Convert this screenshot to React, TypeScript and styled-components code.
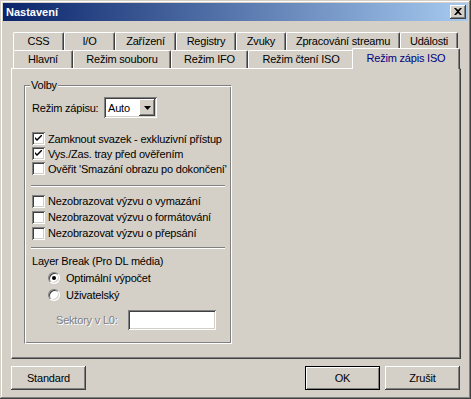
import * as React from 'react';
import styled, { createGlobalStyle } from 'styled-components';

const GlobalStyle = createGlobalStyle`
  body {
    margin: 0;
    background: #d4d0c8;
    font-family: "Liberation Sans", Arial, sans-serif;
    font-size: 11px;
    letter-spacing: -0.2px;
    color: #000;
  }
`;

const raised = `
  box-shadow: inset -1px -1px #404040, inset 1px 1px #fff, inset -2px -2px #808080, inset 2px 2px #d4d0c8;
`;
const sunken = `
  box-shadow: inset 1px 1px #808080, inset -1px -1px #fff, inset 2px 2px #404040, inset -2px -2px #d4d0c8;
`;

const Window = styled.div`
  width: 471px;
  height: 399px;
  box-sizing: border-box;
  padding: 3px;
  background: #d4d0c8;
  box-shadow: inset -1px -1px #404040, inset 1px 1px #d4d0c8, inset -2px -2px #808080, inset 2px 2px #fff;
  display: flex;
  flex-direction: column;
`;

const TitleBar = styled.div`
  height: 18px;
  flex-shrink: 0;
  display: flex;
  align-items: center;
  justify-content: space-between;
  padding: 0 2px 0 2px;
  background: linear-gradient(to right, #0a246a, #a6caf0);
`;

const TitleText = styled.span`
  color: #fff;
  font-weight: bold;
  font-size: 11px;
  letter-spacing: 0;
  padding-left: 1px;
`;

const CloseButton = styled.div`
  width: 16px;
  height: 14px;
  box-sizing: border-box;
  background: #d4d0c8;
  ${raised}
  display: flex;
  align-items: center;
  justify-content: center;
  padding-bottom: 1px;
`;

const TabControl = styled.div`
  width: 450px;
  margin: 11px 0 0 8px;
  display: flex;
  flex-direction: column;
`;

const TabRow = styled.div`
  display: flex;
  align-items: flex-start;
  height: 18px;
  padding: 0 3px 0 2px;
`;

const Tab = styled.div<{ $w: number; $active?: boolean }>`
  flex-shrink: 0;
  box-sizing: border-box;
  width: ${(p) => (p.$active ? p.$w + 4 : p.$w)}px;
  height: ${(p) => (p.$active ? 21 : 18)}px;
  margin: ${(p) => (p.$active ? '-2px -2px -1px -2px' : '0')};
  position: ${(p) => (p.$active ? 'relative' : 'static')};
  z-index: ${(p) => (p.$active ? 1 : 0)};
  background: #d4d0c8;
  color: ${(p) => (p.$active ? '#000080' : '#000')};
  border-top: 1px solid #fff;
  border-left: 1px solid #fff;
  border-right: 1px solid #404040;
  border-radius: 2px 2px 0 0;
  box-shadow: inset -1px 0 #808080;
  text-align: center;
  line-height: ${(p) => (p.$active ? 18 : 16)}px;
  white-space: nowrap;
`;

const Panel = styled.div`
  height: 291px;
  box-sizing: border-box;
  border: 1px solid;
  border-color: #fff #404040 #404040 #fff;
  box-shadow: inset -1px -1px #808080;
  padding: 16px 0 0 12px;
`;

const GroupBox = styled.div`
  width: 208px;
  height: 259px;
  box-sizing: border-box;
  border: 1px solid;
  border-color: #808080 #fff #fff #808080;
  box-shadow: inset 1px 1px #fff, inset -1px -1px #808080;
  padding: 0 0 0 7px;
  display: flex;
  flex-direction: column;
`;

const Legend = styled.div`
  align-self: flex-start;
  margin: -7px 0 0 -2px;
  padding: 0 1px;
  line-height: 13px;
  background: #d4d0c8;
`;

const FieldRow = styled.div<{ $top: number; $h: number }>`
  display: flex;
  align-items: center;
  margin-top: ${(p) => p.$top}px;
  height: ${(p) => p.$h}px;
  flex-shrink: 0;
`;

const FieldLabel = styled.span<{ $w: number; $indent?: number; $disabled?: boolean }>`
  width: ${(p) => p.$w}px;
  margin-left: ${(p) => p.$indent || 0}px;
  flex-shrink: 0;
  color: ${(p) => (p.$disabled ? '#808080' : '#000')};
  text-shadow: ${(p) => (p.$disabled ? '1px 1px 0 #fff' : 'none')};
`;

const Combo = styled.div`
  width: 53px;
  height: 21px;
  box-sizing: border-box;
  background: #fff;
  ${sunken}
  padding: 2px;
  display: flex;
  align-items: center;
`;

const ComboText = styled.span`
  flex: 1;
  padding-left: 2px;
`;

const DropButton = styled.div`
  width: 16px;
  height: 17px;
  box-sizing: border-box;
  background: #d4d0c8;
  ${raised}
  display: flex;
  align-items: center;
  justify-content: center;
`;

const CheckBox = styled.div`
  width: 13px;
  height: 13px;
  flex-shrink: 0;
  box-sizing: border-box;
  background: #fff;
  ${sunken}
  display: flex;
  align-items: center;
  justify-content: center;
`;

const OptionText = styled.span<{ $w: number; $gap: number }>`
  margin-left: ${(p) => p.$gap}px;
  width: ${(p) => p.$w}px;
  overflow: hidden;
  white-space: nowrap;
`;

const Separator = styled.div<{ $top: number }>`
  width: 194px;
  height: 1px;
  margin: ${(p) => p.$top}px 0 0 -1px;
  background: #808080;
  border-bottom: 1px solid #fff;
  flex-shrink: 0;
`;

const Caption = styled.div<{ $top: number }>`
  margin-top: ${(p) => p.$top}px;
  line-height: 13px;
`;

const Radio = styled.div`
  width: 12px;
  height: 12px;
  margin-left: 16px;
  flex-shrink: 0;
  box-sizing: border-box;
  border-radius: 50%;
  background: #fff;
  border: 1px solid;
  border-color: #808080 #fff #fff #808080;
  box-shadow: inset 1px 1px #404040, inset -1px -1px #d4d0c8;
  display: flex;
  align-items: center;
  justify-content: center;
`;

const RadioDot = styled.div`
  width: 4px;
  height: 4px;
  border-radius: 50%;
  background: #000;
`;

const TextInput = styled.div`
  width: 88px;
  height: 20px;
  box-sizing: border-box;
  background: #fff;
  ${sunken}
`;

const ButtonRow = styled.div`
  display: flex;
  margin-top: 7px;
  padding: 0 8px;
  gap: 5px;
`;

const Button = styled.div<{ $default?: boolean; $push?: boolean }>`
  width: 75px;
  height: 24px;
  box-sizing: border-box;
  margin-left: ${(p) => (p.$push ? 'auto' : '0')};
  display: flex;
  align-items: center;
  justify-content: center;
  background: #d4d0c8;
  ${(p) =>
    p.$default
      ? 'border: 1px solid #000; box-shadow: inset 1px 1px #fff, inset -1px -1px #808080;'
      : raised}
`;

const row1 = [
  { label: 'CSS', w: 51 },
  { label: 'I/O', w: 51 },
  { label: 'Zařízení', w: 61 },
  { label: 'Registry', w: 60 },
  { label: 'Zvuky', w: 50 },
  { label: 'Zpracování streamu', w: 114 },
  { label: 'Události', w: 58 },
];

const row2 = [
  { label: 'Hlavní', w: 60 },
  { label: 'Režim souboru', w: 98 },
  { label: 'Režim IFO', w: 77 },
  { label: 'Režim čtení ISO', w: 106 },
  { label: 'Režim zápis ISO', w: 104, active: true },
];

const Check = () => (
  <svg width="7" height="7" viewBox="0 0 7 7">
    <path d="M0 2 L0 4 L2 6 L7 1 L7 -1 L2 4 Z" fill="#000" />
  </svg>
);

interface OptionProps {
  label: string;
  checked?: boolean;
  top: number;
  h: number;
  w: number;
}
function Option({ label, checked, top, h, w }: OptionProps) {
  return (
    <FieldRow $top={top} $h={h}>
      <CheckBox>{checked && <Check />}</CheckBox>
      <OptionText $w={w} $gap={3}>
        {label}
      </OptionText>
    </FieldRow>
  );
}

export default function App() {
  return (
    <Window>
      <GlobalStyle />
      <TitleBar>
        <TitleText>Nastavení</TitleText>
        <CloseButton>
          <svg width="8" height="7" viewBox="0 0 8 7">
            <path d="M0 0 H2 L4 2 L6 0 H8 L5 3.5 L8 7 H6 L4 5 L2 7 H0 L3 3.5 Z" fill="#000" />
          </svg>
        </CloseButton>
      </TitleBar>

      <TabControl>
        <TabRow>
          {row1.map((t) => (
            <Tab key={t.label} $w={t.w}>
              {t.label}
            </Tab>
          ))}
        </TabRow>
        <TabRow>
          {row2.map((t) => (
            <Tab key={t.label} $w={t.w} $active={t.active}>
              {t.label}
            </Tab>
          ))}
        </TabRow>
        <Panel>
          <GroupBox>
            <Legend>Volby</Legend>
            <FieldRow $top={5} $h={21}>
              <FieldLabel $w={72}>Režim zápisu:</FieldLabel>
              <Combo>
                <ComboText>Auto</ComboText>
                <DropButton>
                  <svg width="7" height="4" viewBox="0 0 7 4">
                    <path d="M0 0 H7 L3.5 4 Z" fill="#000" />
                  </svg>
                </DropButton>
              </Combo>
            </FieldRow>

            <Option label="Zamknout svazek - exkluzivní přístup" checked top={13} h={15} w={180} />
            <Option label="Vys./Zas. tray před ověřením" checked top={0} h={15} w={184} />
            <Option label="Ověřit 'Smazání obrazu po dokončení'" top={0} h={15} w={186} />

            <Separator $top={9} />

            <Option label="Nezobrazovat výzvu o vymazání" top={6} h={16} w={176} />
            <Option label="Nezobrazovat výzvu o formátování" top={0} h={16} w={176} />
            <Option label="Nezobrazovat výzvu o přepsání" top={0} h={16} w={176} />

            <Separator $top={6} />

            <Caption $top={6}>Layer Break (Pro DL média)</Caption>

            <FieldRow $top={1} $h={17}>
              <Radio>
                <RadioDot />
              </Radio>
              <OptionText $w={140} $gap={6}>
                Optimální výpočet
              </OptionText>
            </FieldRow>
            <FieldRow $top={0} $h={17}>
              <Radio />
              <OptionText $w={140} $gap={6}>
                Uživatelský
              </OptionText>
            </FieldRow>

            <FieldRow $top={7} $h={20}>
              <FieldLabel $w={72} $indent={24} $disabled>
                Sektory v L0:
              </FieldLabel>
              <TextInput />
            </FieldRow>
          </GroupBox>
        </Panel>
      </TabControl>

      <ButtonRow>
        <Button>Standard</Button>
        <Button $default $push>
          OK
        </Button>
        <Button>Zrušit</Button>
      </ButtonRow>
    </Window>
  );
}
